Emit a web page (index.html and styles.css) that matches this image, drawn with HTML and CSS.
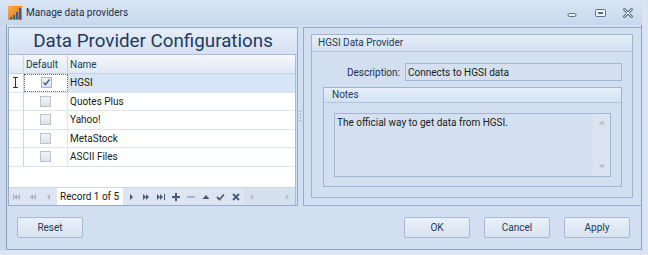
FILE: index.html
```html
<!DOCTYPE html>
<html lang="en">
<head>
    <meta charset="UTF-8">
    <title>Manage data providers</title>
    <link rel="stylesheet" href="styles.css">
</head>
<body>
    <div class="window">
        <div class="titlebar">
            <svg class="app-icon" width="14" height="14" viewBox="0 0 14 14">
                <defs>
                    <linearGradient id="appg" x1="0" y1="0" x2="1" y2="1">
                        <stop offset="0" stop-color="#f6b14c"/>
                        <stop offset="1" stop-color="#e06c18"/>
                    </linearGradient>
                </defs>
                <rect width="14" height="14" fill="url(#appg)"/>
                <path d="M2 13h2v-2H2z M5 13h2v-4H5z M8 13h2V6H8z M11 13h2V2h-2z" fill="#2d5cb0"/>
            </svg>
            <span class="title">Manage data providers</span>
            <div class="caption-btns">
                <span class="cap-btn">
                    <svg width="10" height="10" viewBox="0 0 10 10"><rect x="1" y="5.5" width="8" height="3" rx="1.5" fill="#eef3fa" stroke="#5b6d89"/></svg>
                </span>
                <span class="cap-btn">
                    <svg width="11" height="10" viewBox="0 0 11 10"><rect x="0.5" y="1.5" width="10" height="7" rx="1" fill="#eef3fa" stroke="#5b6d89"/><rect x="3" y="4" width="5" height="2" fill="#5b6d89"/></svg>
                </span>
                <span class="cap-btn">
                    <svg width="10" height="10" viewBox="0 0 10 10"><path d="M1.5 1.5l7 7M8.5 1.5l-7 7" stroke="#5b6d89" stroke-width="2.8" stroke-linecap="round"/><path d="M1.5 1.5l7 7M8.5 1.5l-7 7" stroke="#eef3fa" stroke-width="1" stroke-linecap="round"/></svg>
                </span>
            </div>
        </div>

        <div class="client">
            <div class="main">
                <div class="left-panel">
                    <div class="heading">Data Provider Configurations</div>
                    <div class="grid">
                        <div class="row head">
                            <div class="ind"></div>
                            <div class="def">Default</div>
                            <div class="name">Name</div>
                        </div>
                        <div class="row sel">
                            <div class="ind">
                                <svg width="6" height="11" viewBox="0 0 6 11"><path d="M0 0.5h5M0 10.5h5M2.5 0v11" stroke="#333" stroke-width="1"/></svg>
                            </div>
                            <div class="def focus"><span class="check on">
                                <svg width="9" height="9" viewBox="0 0 9 9"><path d="M1.5 4.5l2 2 4-5" fill="none" stroke="#47669a" stroke-width="1.6"/></svg>
                            </span></div>
                            <div class="name">HGSI</div>
                        </div>
                        <div class="row">
                            <div class="ind"></div>
                            <div class="def"><span class="check"></span></div>
                            <div class="name">Quotes Plus</div>
                        </div>
                        <div class="row">
                            <div class="ind"></div>
                            <div class="def"><span class="check"></span></div>
                            <div class="name">Yahoo!</div>
                        </div>
                        <div class="row">
                            <div class="ind"></div>
                            <div class="def"><span class="check"></span></div>
                            <div class="name">MetaStock</div>
                        </div>
                        <div class="row">
                            <div class="ind"></div>
                            <div class="def"><span class="check"></span></div>
                            <div class="name">ASCII Files</div>
                        </div>
                        <div class="grid-empty"></div>
                        <div class="navigator">
                            <span class="nav-btn off"><svg width="8" height="8" viewBox="0 0 8 8"><path d="M0 1h1v6H0z M4 1v6L1 4z M7 1v6L4 4z"/></svg></span>
                            <span class="nav-btn off"><svg width="8" height="8" viewBox="0 0 8 8"><path d="M4 1v6L1 4z M7 1v6L4 4z"/></svg></span>
                            <span class="nav-btn off"><svg width="8" height="8" viewBox="0 0 8 8"><path d="M5 1v6L2 4z"/></svg></span>
                            <span class="record">Record 1 of 5</span>
                            <span class="nav-btn"><svg width="8" height="8" viewBox="0 0 8 8"><path d="M3 1v6l3-3z"/></svg></span>
                            <span class="nav-btn"><svg width="8" height="8" viewBox="0 0 8 8"><path d="M1 1v6l3-3z M4 1v6l3-3z"/></svg></span>
                            <span class="nav-btn"><svg width="8" height="8" viewBox="0 0 8 8"><path d="M0 1v6l3-3z M3 1v6l3-3z M7 1h1v6H7z"/></svg></span>
                            <span class="nav-btn"><svg width="8" height="8" viewBox="0 0 8 8"><path d="M3 0h2v3h3v2H5v3H3V5H0V3h3z"/></svg></span>
                            <span class="nav-btn off"><svg width="8" height="8" viewBox="0 0 8 8"><path d="M0 3h8v2H0z"/></svg></span>
                            <span class="nav-btn"><svg width="8" height="8" viewBox="0 0 8 8"><path d="M4 2l3.5 4h-7z"/></svg></span>
                            <span class="nav-btn"><svg width="9" height="8" viewBox="0 0 9 8"><path d="M1 4l2.5 2.5L8 1.5" fill="none" stroke="#455876" stroke-width="1.8"/></svg></span>
                            <span class="nav-btn"><svg width="8" height="8" viewBox="0 0 8 8"><path d="M1 1l6 6M7 1L1 7" stroke="#455876" stroke-width="1.8"/></svg></span>
                            <span class="hscroll">
                                <svg width="5" height="8" viewBox="0 0 5 8"><path d="M4 1v6L1 4z"/></svg>
                                <svg width="5" height="8" viewBox="0 0 5 8"><path d="M1 1v6l3-3z"/></svg>
                            </span>
                        </div>
                    </div>
                </div>

                <div class="splitter"><span class="grip"></span></div>

                <div class="right-panel">
                    <div class="group">
                        <div class="group-head">HGSI Data Provider</div>
                        <div class="group-body">
                            <div class="field">
                                <span class="label">Description:</span>
                                <span class="input">Connects to HGSI data</span>
                            </div>
                            <div class="group notes">
                                <div class="group-head">Notes</div>
                                <div class="notes-body">
                                    <div class="memo">
                                        <span class="memo-text">The official way to get data from HGSI.</span>
                                        <span class="vscroll">
                                            <svg width="8" height="5" viewBox="0 0 8 5"><path d="M4 0.5l3.5 4h-7z"/></svg>
                                            <svg width="8" height="5" viewBox="0 0 8 5"><path d="M4 4.5l3.5-4h-7z"/></svg>
                                        </span>
                                    </div>
                                </div>
                            </div>
                        </div>
                    </div>
                </div>
            </div>

            <div class="footer">
                <button class="btn">Reset</button>
                <span class="spacer"></span>
                <button class="btn">OK</button>
                <button class="btn">Cancel</button>
                <button class="btn">Apply</button>
            </div>
        </div>
    </div>
</body>
</html>
```

FILE: styles.css
```css
*{
    margin: 0;
    padding: 0;
    box-sizing: border-box;
}

body{
    width: 648px;
    height: 255px;
    overflow: hidden;
    background: #dbe5f1;
    font-family: Roboto, "Liberation Sans", sans-serif;
    font-size: 10px;
    color: #1a1a1a;
}

.window{
    width: 642px;
    height: 250px;
    background: #cbdaee;
    display: flex;
    flex-direction: column;
}

/* title bar */
.titlebar{
    height: 25px;
    display: flex;
    align-items: center;
    padding-left: 8px;
    background: linear-gradient(#d9e5f4, #c8d8ed);
}
.app-icon{
    margin-right: 4px;
}
.title{
    color: #1e2f48;
    font-size: 10px;
}
.caption-btns{
    margin-left: auto;
    display: flex;
}
.cap-btn{
    width: 28px;
    height: 20px;
    display: flex;
    align-items: center;
    justify-content: center;
}

/* client */
.client{
    flex: 1;
    margin-left: 6px;
    border: 1px solid #8aa2c4;
    border-top: none;
    background: #d2dff0;
    display: flex;
    flex-direction: column;
}
.main{
    height: 181px;
    padding: 2px 0 0 1px;
    display: flex;
}

/* left panel with grid */
.left-panel{
    width: 290px;
    border: 1px solid #95acca;
    display: flex;
    flex-direction: column;
}
.heading{
    height: 27px;
    line-height: 26px;
    text-align: center;
    font-size: 18.8px;
    color: #1f3a5e;
    background: linear-gradient(#e6eef9, #d5e2f4);
    border-bottom: 1px solid #a8bcd8;
}
.grid{
    flex: 1;
    margin-right: 1px;
    border-right: 1px solid #a8bcd8;
    background: #ffffff;
    display: flex;
    flex-direction: column;
}
.row{
    height: 18.5px;
    display: flex;
    border-bottom: 1px solid #dfe5ee;
}
.row.head{
    height: 19px;
    border-bottom: 1px solid #c4d1e3;
    background: linear-gradient(#f4f7fc, #e1e9f4);
    color: #1e395b;
}
.ind{
    width: 15px;
    border-right: 1px solid #c9d5e5;
    display: flex;
    align-items: center;
    padding-left: 4px;
}
.def{
    width: 44px;
    border-right: 1px solid #dfe5ee;
    display: flex;
    align-items: center;
    justify-content: center;
}
.row.head .def,
.row.head .name{
    justify-content: flex-start;
    padding-left: 2px;
    border-right-color: #c4d1e3;
}
.name{
    flex: 1;
    display: flex;
    align-items: center;
    padding-left: 2px;
}
.row.sel .name{
    background: #d8e5f6;
}
.def.focus{
    border: 1px dotted #6b6b6b;
}
.check{
    width: 11px;
    height: 11px;
    border: 1px solid #b9c3d0;
    background: linear-gradient(#f2f4f7, #dfe3e9);
    display: flex;
    align-items: center;
    justify-content: center;
}
.check.on{
    border-color: #a9b6c8;
}
.grid-empty{
    flex: 1;
}

/* navigator */
.navigator{
    height: 18px;
    display: flex;
    align-items: stretch;
    background: #dce5f1;
    border-top: 1px solid #cad6e6;
}
.nav-btn{
    width: 15px;
    display: flex;
    align-items: center;
    justify-content: center;
    fill: #455876;
}
.navigator .nav-btn:nth-child(-n+3){
    width: 16px;
}
.nav-btn.off{
    fill: #a9b5c6;
}
.record{
    width: 66px;
    background: #ffffff;
    padding-left: 3px;
    display: flex;
    align-items: center;
    color: #1a1a1a;
}
.hscroll{
    flex: 1;
    margin-left: 1px;
    display: flex;
    align-items: center;
    justify-content: space-between;
    padding: 0 5px;
    fill: #b4bfcd;
    background: #d7e1ee;
}

/* splitter */
.splitter{
    width: 5px;
    display: flex;
    align-items: center;
    justify-content: center;
}
.grip{
    width: 1px;
    height: 11px;
    background: repeating-linear-gradient(to bottom, #7f91ab 0 1px, transparent 1px 3px);
}

/* right panel */
.right-panel{
    flex: 1;
    border: 1px solid #95acca;
    border-right: none;
    padding: 6px 8px 7px 7px;
    display: flex;
}
.group{
    flex: 1;
    border: 1px solid #9fb4d1;
    display: flex;
    flex-direction: column;
}
.group-head{
    height: 17px;
    line-height: 16px;
    padding-left: 6px;
    color: #1e395b;
    background: linear-gradient(#e6eef9, #d4e1f3);
    border-bottom: 1px solid #b2c4dc;
}
.group-body{
    flex: 1;
    padding: 11px 10px 10px 11px;
    display: flex;
    flex-direction: column;
}
.field{
    height: 18px;
    display: flex;
    align-items: center;
}
.label{
    width: 77px;
    text-align: right;
    margin-right: 5px;
    color: #1e2f48;
}
.input{
    flex: 1;
    height: 18px;
    border: 1px solid #a5b7d1;
    background: #d5e1f1;
    padding-left: 2px;
    display: flex;
    align-items: center;
}
.notes{
    margin-top: 6px;
}
.notes .group-head{
    height: 15px;
    line-height: 14px;
    padding-left: 8px;
}
.notes-body{
    flex: 1;
    padding: 10px 10px 9px 10px;
    display: flex;
}
.memo{
    flex: 1;
    border: 1px solid #a3b6d1;
    background: #d5e1f1;
    display: flex;
}
.memo-text{
    flex: 1;
    padding: 3px 0 0 2px;
}
.vscroll{
    width: 17px;
    background: #dbe4f0;
    display: flex;
    flex-direction: column;
    justify-content: space-between;
    align-items: center;
    padding: 6px 0 7px;
    fill: #b7c2d0;
}

/* footer */
.footer{
    flex: 1;
    display: flex;
    align-items: flex-start;
    gap: 14px;
    padding: 11px 11px 0 10px;
}
.spacer{
    flex: 1;
}
.btn{
    width: 66px;
    height: 21px;
    border: 1px solid #a8b9d1;
    border-radius: 2px;
    background: linear-gradient(#e8eff8, #d8e3f1);
    font-family: Roboto, "Liberation Sans", sans-serif;
    font-size: 10px;
    color: #1e395b;
}
```
